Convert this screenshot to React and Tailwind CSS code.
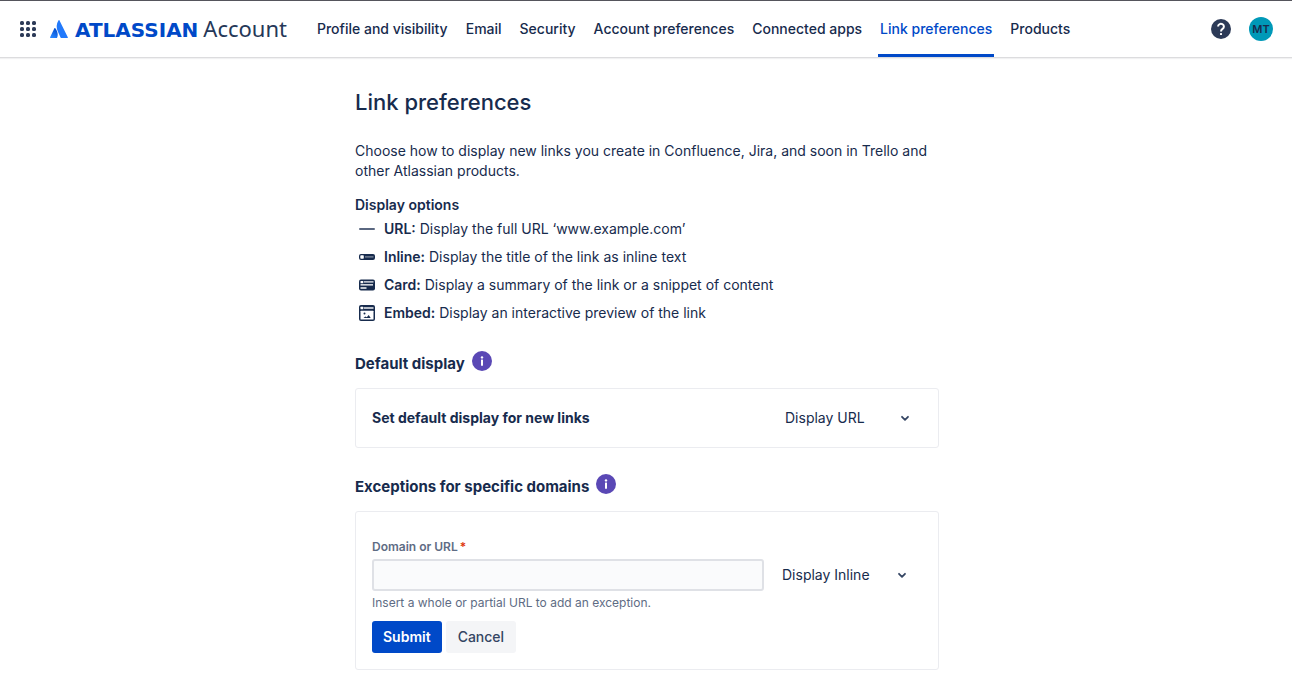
import React from "react";

const NAV = [
  "Profile and visibility",
  "Email",
  "Security",
  "Account preferences",
  "Connected apps",
  "Link preferences",
  "Products",
];

function AppSwitcherIcon() {
  const at = [3, 9, 15];
  return (
    <svg width="18" height="18" viewBox="0 0 18 18" fill="#2c3a57" aria-hidden="true">
      {at.map((y) => at.map((x) => <rect key={`${x}-${y}`} x={x - 2} y={y - 2} width="4" height="4" rx="1.6" />))}
    </svg>
  );
}

function AtlassianMark() {
  return (
    <svg width="18" height="18" viewBox="0 0 18 18" aria-hidden="true">
      <defs>
        <linearGradient id="mark" x1="7" y1="9" x2="2" y2="17" gradientUnits="userSpaceOnUse">
          <stop offset="0" stopColor="#0049c8" />
          <stop offset="1" stopColor="#2684ff" />
        </linearGradient>
      </defs>
      <path d="M5.300 8.200c-.3-.4-.7-.3-.9.1L.1 17.200c-.2.4 0 .8.500.8h6c.2 0 .4-.1.500-.3 1.300-2.700.5-6.700-1.800-9.500z" fill="url(#mark)" />
      <path d="M8.500.4C6.100 4.200 6.300 8.400 7.800 11.500l2.900 6.200c.1.200.3.300.5.300h6.100c.4 0 .7-.4.500-.8L9.500.4c-.2-.5-.7-.5-1 0z" fill="#2279fb" />
    </svg>
  );
}

function HelpIcon() {
  return (
    <svg width="20" height="20" viewBox="0 0 20 20" aria-hidden="true">
      <circle cx="10" cy="10" r="10" fill="#2c3a57" />
      <path d="M7.100 7.600a2.900 2.700 0 1 1 4.500 2.200c-1 .7-1.600 1.100-1.600 2.600" fill="none" stroke="#fff" strokeWidth="2" />
      <rect x="9" y="14" width="2" height="2" rx=".5" fill="#fff" />
    </svg>
  );
}

function InfoIcon() {
  return (
    <svg width="20" height="20" viewBox="0 0 20 20" aria-hidden="true">
      <circle cx="10" cy="10" r="10" fill="#5a48b5" />
      <circle cx="10" cy="6.400" r="1.200" fill="#fff" />
      <rect x="9" y="8.500" width="2" height="6.200" rx=".5" fill="#fff" />
    </svg>
  );
}

function Chevron() {
  return (
    <svg className="pointer-events-none absolute top-[11px] right-3" width="10" height="10" viewBox="0 0 10 10" aria-hidden="true">
      <path d="M2 3.800 5 6.800 8 3.800" fill="none" stroke="#344563" strokeWidth="1.800" strokeLinecap="round" strokeLinejoin="round" />
    </svg>
  );
}

const OPTIONS = [
  {
    name: "URL:",
    text: "Display the full URL ‘www.example.com’",
    icon: <rect x="0" y="7" width="16" height="2" rx="1" fill="#5a6780" />,
  },
  {
    name: "Inline:",
    text: "Display the title of the link as inline text",
    icon: (
      <>
        <rect x="0" y="5" width="16" height="6" rx="2" fill="#172b4d" />
        <rect x="1.300" y="6.300" width="3.500" height="3.400" rx=".8" fill="#fff" />
        <rect x="6" y="7.300" width="8.500" height="1.200" fill="#8993a4" />
      </>
    ),
  },
  {
    name: "Card:",
    text: "Display a summary of the link or a snippet of content",
    icon: (
      <>
        <rect x="0" y="2.500" width="16" height="11" rx="2" fill="#172b4d" />
        <rect x="1.500" y="4" width="2.800" height="2.200" rx=".5" fill="#fff" />
        <rect x="5" y="4.300" width="9.500" height="1.200" fill="#fff" />
        <rect x="1.500" y="7.200" width="12.500" height="1.300" fill="#fff" />
        <rect x="1.500" y="10" width="6" height="2" fill="#c1c7d0" />
      </>
    ),
  },
  {
    name: "Embed:",
    text: "Display an interactive preview of the link",
    icon: (
      <>
        <rect x="0" y="0" width="16" height="16" rx="2" fill="#172b4d" />
        <rect x="1.500" y="1.800" width="2.800" height="2.400" rx=".5" fill="#fff" />
        <rect x="5" y="2.300" width="9.500" height="1.400" fill="#fff" />
        <rect x="1.500" y="5.800" width="13" height="8.700" rx=".5" fill="#fff" />
        <circle cx="5.500" cy="8.500" r="1" fill="#172b4d" />
        <path d="M4.500 13l1.800-1.500 1.500.8L9.700 10l2 3z" fill="#172b4d" />
      </>
    ),
  },
];

function DisplaySelect({ label, value }) {
  return (
    <div className="relative w-[140px] shrink-0">
      <select
        aria-label={label}
        defaultValue={value}
        className="h-8 w-full appearance-none bg-transparent pr-8 pl-[3px] text-sm leading-5 text-[#172b4d]"
      >
        <option>Display URL</option>
        <option>Display Inline</option>
        <option>Display Card</option>
        <option>Display Embed</option>
      </select>
      <Chevron />
    </div>
  );
}

function SectionTitle({ children, info }) {
  return (
    <div className="flex h-[22px] items-start gap-[7px]">
      <h2 className="pt-[3px] text-[15px] leading-5 font-bold">{children}</h2>
      <button type="button" aria-label={info}>
        <InfoIcon />
      </button>
    </div>
  );
}

export default function App() {
  return (
    <div className="bg-white font-['Inter',sans-serif] text-sm leading-5 text-[#172b4d]">
      <header className="flex h-[58px] items-center border-t border-b border-t-[#55555c] border-b-[#dcdcde] pr-[19px] pl-[19px] shadow-[0_1px_1px_#f1f1f2]">
        <button type="button" aria-label="Switch apps">
          <AppSwitcherIcon />
        </button>
        <a href="#home" className="ml-[13px] flex items-center gap-[7px] whitespace-nowrap">
          <AtlassianMark />
          <span className="flex items-baseline gap-[5px]">
            <span className="font-['DejaVu_Sans',sans-serif] text-xl leading-6 font-bold text-[#0049c8]">ATLASSIAN</span>
            <span className="font-['Noto_Sans',sans-serif] text-[22px] leading-6 text-[#253858]">Account</span>
          </span>
        </a>
        <nav className="ml-7 flex h-full gap-[14px] self-stretch font-medium whitespace-nowrap">
          {NAV.map((item) => (
            <a
              key={item}
              href="#nav"
              aria-current={item === "Link preferences" ? "page" : undefined}
              className={
                item === "Link preferences"
                  ? "flex items-center border-b-3 border-[#0049c8] px-0.5 pt-[3px] text-[#0049c8]"
                  : "flex items-center px-0.5"
              }
            >
              {item}
            </a>
          ))}
        </nav>
        <div className="ml-auto flex items-center gap-[18px]">
          <button type="button" aria-label="Help">
            <HelpIcon />
          </button>
          <button type="button" className="size-6 rounded-full bg-[#0099b8] text-center text-[11px] font-semibold text-[#172b4d]">
            MT
          </button>
        </div>
      </header>

      <main className="mx-auto max-w-[586px] pt-[30px] pb-6 pl-0.5">
        <h1 className="text-[22px] leading-7 font-medium">Link preferences</h1>
        <p className="mt-[25px]">
          Choose how to display new links you create in Confluence, Jira, and soon in Trello and other Atlassian products.
        </p>
        <h3 className="mt-3.5 font-semibold">Display options</h3>
        <ul className="flex flex-col">
          {OPTIONS.map((o) => (
            <li key={o.name} className="flex h-7 items-center gap-[9px] pl-1">
              <svg width="16" height="16" viewBox="0 0 16 16" aria-hidden="true">
                {o.icon}
              </svg>
              <span>
                <b className="font-semibold">{o.name}</b> {o.text}
              </span>
            </li>
          ))}
        </ul>

        <section className="mt-6">
          <SectionTitle info="About default display">Default display</SectionTitle>
          <div className="mt-[15px] flex h-[60px] items-center justify-between rounded-[3px] border border-[#ebecf0] px-4">
            <span className="font-bold">Set default display for new links</span>
            <DisplaySelect label="Default display for new links" value="Display URL" />
          </div>
        </section>

        <section className="mt-[26px]">
          <SectionTitle info="About exceptions">Exceptions for specific domains</SectionTitle>
          <form className="mt-[15px] rounded-[3px] border border-[#ebecf0] p-4 pt-[27px]" onSubmit={(e) => e.preventDefault()}>
            <label htmlFor="domain" className="block text-xs leading-4 font-semibold text-[#5e6c84]">
              Domain or URL<span className="pl-0.5 text-[#de350b]">*</span>
            </label>
            <div className="mt-1 flex items-center gap-[15px] pr-[3px]">
              <input id="domain" type="text" required className="h-8 min-w-0 flex-1 rounded-[3px] border-2 border-[#dfe1e6] bg-[#fafbfc] px-2" />
              <DisplaySelect label="Display for this domain" value="Display Inline" />
            </div>
            <p className="mt-1 text-xs leading-4 text-[#5e6c84]">Insert a whole or partial URL to add an exception.</p>
            <div className="mt-2.5 flex gap-1">
              <button type="submit" className="h-8 rounded-[3px] bg-[#0049c8] px-[11px] font-semibold text-white">
                Submit
              </button>
              <button type="button" className="h-8 rounded-[3px] bg-[#f4f5f7] px-3 font-medium text-[#344563]">
                Cancel
              </button>
            </div>
          </form>
        </section>
      </main>
    </div>
  );
}
